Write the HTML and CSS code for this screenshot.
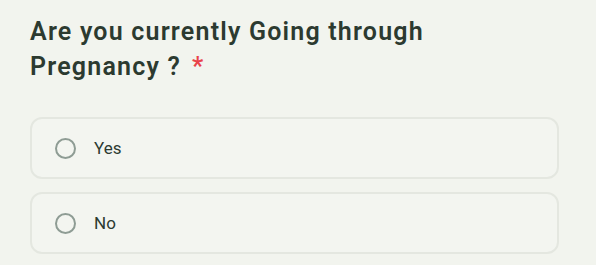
FILE: index.html
```html
<!DOCTYPE html>
<html>
<head>
<meta charset="utf-8">
<link rel="stylesheet" href="styles.css">
</head>
<body>
<div class="question">
  <h1 class="title"><span>Are you currently Going through</span> <span>Pregnancy ?</span><span class="req">*</span></h1>
  <div class="options">
    <label class="option"><span class="radio"></span><span class="label">Yes</span></label>
    <label class="option"><span class="radio"></span><span class="label">No</span></label>
  </div>
</div>
</body>
</html>
```
FILE: styles.css
```css
html, body {
  margin: 0;
  padding: 0;
  background: #f2f4ee;
}
.question {
  padding: 14px 0 0 30px;
  width: 529px;
  font-family: "Roboto", "Liberation Sans", sans-serif;
}
.title {
  margin: 0;
  width: 440px;
  font-size: 25px;
  line-height: 35px;
  font-weight: 600;
  letter-spacing: 1.2px;
  color: #2c3a30;
}
.req {
  display: inline-block;
  color: #e9434a;
  margin-left: 11px;
  letter-spacing: 0;
}
.options {
  margin-top: 33px;
  display: flex;
  flex-direction: column;
  gap: 13px;
}
.option {
  box-sizing: border-box;
  height: 62px;
  border: 2px solid #e4e7e0;
  border-radius: 12px;
  background: #f3f5f0;
  display: flex;
  align-items: center;
  padding-left: 23px;
  gap: 18px;
}
.radio {
  box-sizing: border-box;
  width: 21px;
  height: 21px;
  border: 2px solid #8e9c94;
  border-radius: 50%;
}
.label {
  font-size: 17px;
  color: #2c3a30;
}
```
